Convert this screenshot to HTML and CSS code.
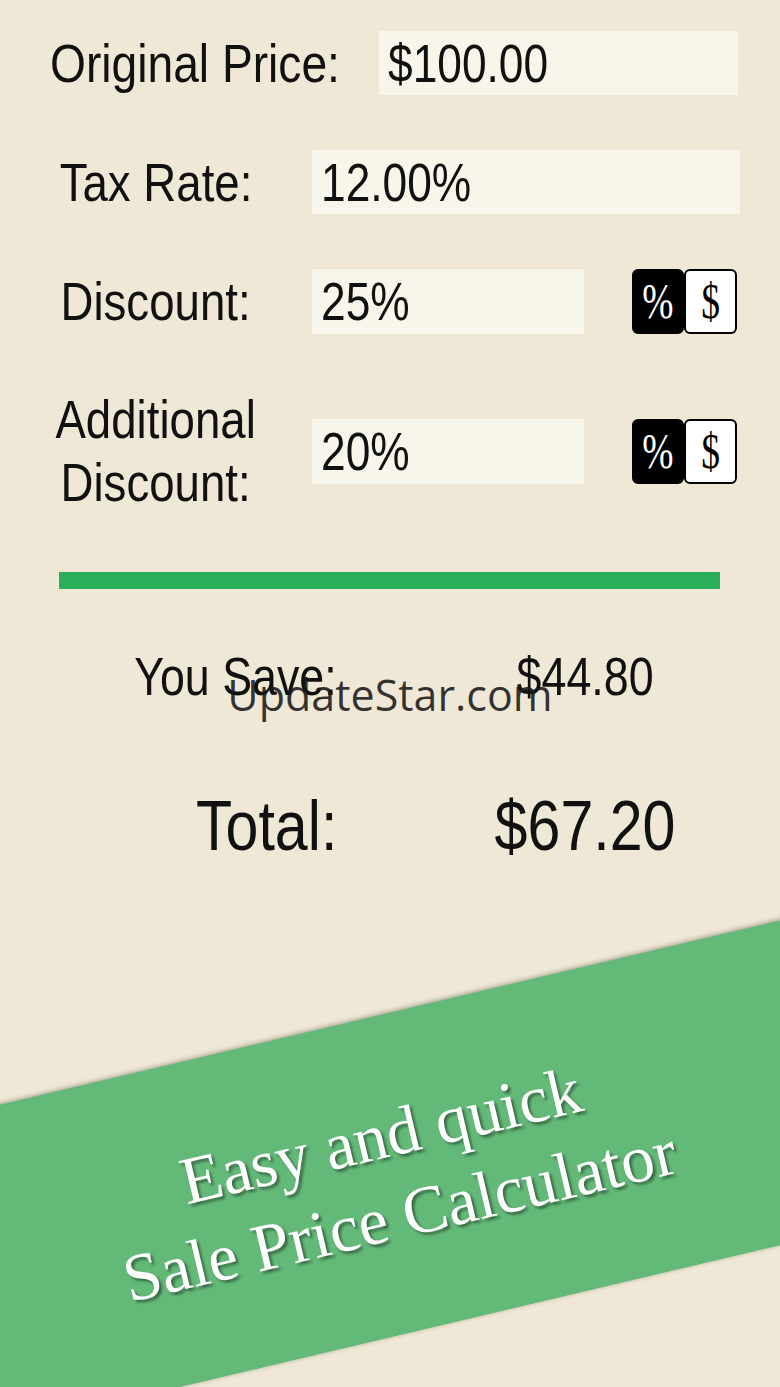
FILE: index.html
```html
<!DOCTYPE html>
<html lang="en">
<head>
  <meta charset="UTF-8" />
  <meta name="viewport" content="width=device-width, initial-scale=1.0"/>
  <title>Sale Price Calculator</title>
  <link rel="stylesheet" href="styles.css">
</head>
<body>
  <main class="calc">
    <div class="row">
      <div class="label label-first"><span class="squeeze">Original Price:</span></div>
      <div class="field field-first"><span class="squeeze">$100.00</span></div>
    </div>

    <div class="row">
      <div class="label"><span class="squeeze">Tax Rate:</span></div>
      <div class="field field-tax"><span class="squeeze">12.00%</span></div>
    </div>

    <div class="row">
      <div class="label"><span class="squeeze">Discount:</span></div>
      <div class="field"><span class="squeeze">25%</span></div>
      <div class="toggle">
        <button class="toggle-btn active"><span class="glyph">%</span></button>
        <button class="toggle-btn"><span class="glyph">$</span></button>
      </div>
    </div>

    <div class="row row-tall">
      <div class="label"><span class="squeeze">Additional<br>Discount:</span></div>
      <div class="field"><span class="squeeze">20%</span></div>
      <div class="toggle">
        <button class="toggle-btn active"><span class="glyph">%</span></button>
        <button class="toggle-btn"><span class="glyph">$</span></button>
      </div>
    </div>
  </main>

  <div class="divider"></div>

  <section class="results">
    <div class="result">
      <span class="result-label"><span class="squeeze">You Save:</span></span>
      <span class="result-value"><span class="squeeze">$44.80</span></span>
    </div>
    <div class="result result-total">
      <span class="result-label"><span class="squeeze">Total:</span></span>
      <span class="result-value"><span class="squeeze">$67.20</span></span>
    </div>
  </section>

  <!-- promo ribbon -->
  <div class="banner">
    <p class="banner-text">Easy and quick<br>Sale Price Calculator</p>
  </div>

  <div class="watermark">UpdateStar.com</div>
</body>
</html>
```

FILE: styles.css
```css
body {
  margin: 0;
  width: 780px;
  height: 1387px;
  overflow: hidden;
  position: relative;
  background-color: #efe8d6;
  color: #111;
  font-family: "Liberation Sans", Arial, sans-serif;
}

/* the app uses a condensed helvetica, so squeeze the text */
.squeeze {
  display: inline-block;
  transform: scaleX(0.845);
  white-space: nowrap;
}

.calc {
  display: flex;
  flex-direction: column;
  gap: 55px;
  padding-top: 31px;
}

.row {
  display: flex;
  align-items: center;
  height: 64px;
}

.row-tall {
  height: 126px;
}

.label {
  width: 312px;
  flex-shrink: 0;
  text-align: center;
  font-size: 54px;
  line-height: 63px;
}

.label-first {
  width: 329px;
  padding-left: 50px;
  text-align: left;
}

.label-first .squeeze {
  transform: scaleX(0.855);
  transform-origin: left center;
}

.field {
  box-sizing: border-box;
  width: 272px;
  height: 65px;
  padding-left: 9px;
  background: #f8f5ea;
  font-size: 54px;
  line-height: 65px;
}

.field .squeeze {
  transform: scaleX(0.82);
  transform-origin: left center;
}

.field-first {
  width: 359px;
  height: 64px;
  line-height: 64px;
}

.field-tax {
  width: 428px;
  height: 64px;
  line-height: 64px;
}

.toggle {
  display: flex;
  margin-left: 48px;
}

.toggle-btn {
  width: 53px;
  height: 65px;
  padding: 0;
  border: 2px solid #000;
  border-radius: 6px;
  background: #fff;
  color: #000;
  font-family: "Liberation Serif", "Times New Roman", serif;
  font-size: 50px;
  line-height: 1;
}

.toggle-btn.active {
  width: 52px;
  background: #000;
  color: #fff;
}

.glyph {
  display: inline-block;
  transform: scaleX(0.75);
}

.divider {
  width: 661px;
  height: 17px;
  margin: 58px 0 0 59px;
  background: #2bae5c;
}

.results {
  margin-top: 58px;
}

.result {
  display: grid;
  grid-template-columns: 337px 390px;
  column-gap: 53px;
  font-size: 53px;
  line-height: 60px;
}

.result-label {
  text-align: right;
}

.result-label .squeeze {
  transform: scaleX(0.845);
  transform-origin: right center;
}

.result-value {
  text-align: center;
}

.result-total {
  margin-top: 79px;
  font-size: 70px;
  line-height: 80px;
}

.banner {
  display: flex;
  align-items: center;
  justify-content: center;
  width: 1200px;
  height: 316px;
  margin: 151px 0 0 -210px;
  background: #63ba78;
  box-shadow: 0 -1px 5px rgba(0, 0, 0, 0.35);
  transform: rotate(-13.3deg);
}

.banner-text {
  margin: 0;
  color: #fff;
  font-family: "Liberation Serif", "Times New Roman", serif;
  font-size: 67px;
  line-height: 82px;
  text-align: center;
  text-shadow: 2px 3px 3px rgba(0, 0, 0, 0.45);
}

.watermark {
  position: absolute;
  top: 673px;
  left: 0;
  width: 780px;
  text-align: center;
  font-family: "Open Sans", sans-serif;
  font-size: 43px;
  line-height: 43px;
  color: rgba(25, 25, 25, 0.88);
}
```
